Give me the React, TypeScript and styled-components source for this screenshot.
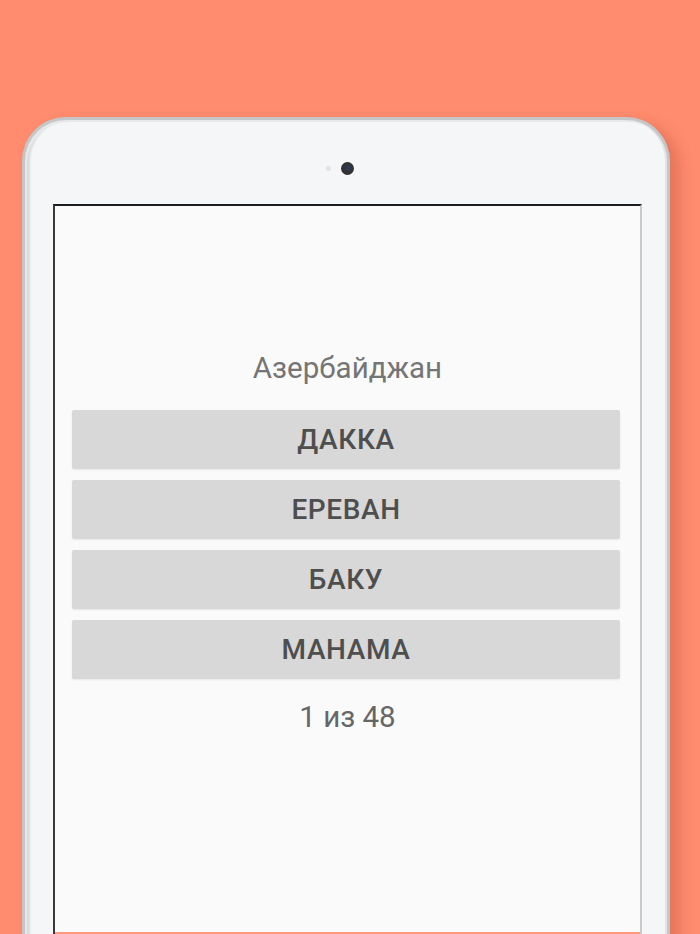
import React from "react";
import styled, { createGlobalStyle } from "styled-components";

const GlobalStyle = createGlobalStyle`
  html, body {
    margin: 0;
    padding: 0;
    height: 100%;
    overflow: hidden;
    background: #ff8c6e;
  }
  body {
    font-family: Roboto, "Noto Sans", Arial, sans-serif;
  }
`;

const Page = styled.div`
  width: 700px;
  height: 934px;
  padding-top: 117px;
  padding-left: 22px;
  box-sizing: border-box;
  overflow: hidden;
`;

const Tablet = styled.div`
  width: 648px;
  height: 900px;
  box-sizing: border-box;
  border: 3px solid #c4c6c8;
  border-bottom: none;
  border-radius: 44px 44px 0 0;
  background: #f4f6f8;
  box-shadow: inset 2px 2px 0 #e6e8ea, inset -2px 0 0 #e2e4e6,
    inset 5px 0 2px #d9dbdd, 10px 6px 14px rgba(160, 60, 40, 0.28);
  padding: 84px 25px 0 28px;
  display: flex;
  flex-direction: column;
`;

const CameraRow = styled.div`
  height: 0;
  position: relative;
`;

const Sensor = styled.span`
  position: absolute;
  top: -38px;
  left: 273px;
  width: 5px;
  height: 5px;
  border-radius: 50%;
  background: #e2e4e6;
`;

const Lens = styled.span`
  position: absolute;
  top: -42px;
  left: 288px;
  width: 13px;
  height: 13px;
  border-radius: 50%;
  background: radial-gradient(circle at 55% 45%, #2c3a66 0%, #333 45%, #2a2a2a 100%);
`;

const Screen = styled.div`
  flex: 0 0 730px;
  box-sizing: border-box;
  background: #fafafa;
  border-top: 2px solid #1e1e1e;
  border-left: 2px solid #3a3a3a;
  border-right: 2px solid #c9cacb;
  display: flex;
  flex-direction: column;
  align-items: stretch;
  padding: 145px 20px 0 17px;
`;

const Country = styled.div`
  font-size: 29.5px;
  color: #757575;
  text-align: center;
  line-height: 34px;
  margin-bottom: 25px;
  margin-left: 3px;
`;

const Options = styled.div`
  display: flex;
  flex-direction: column;
  gap: 11px;
`;

const Option = styled.button`
  height: 59px;
  border: none;
  border-radius: 2px;
  background: #d7d8d7;
  box-shadow: 0 1px 2px rgba(0, 0, 0, 0.08);
  color: #4e4e4e;
  font-family: Roboto, "Noto Sans", Arial, sans-serif;
  font-weight: 500;
  font-size: 28px;
  letter-spacing: 0.6px;
  text-transform: uppercase;
  padding: 0;
  cursor: pointer;
`;

const Counter = styled.div`
  margin-top: 21px;
  font-size: 29.5px;
  color: #666;
  text-align: center;
  line-height: 34px;
  margin-left: 3px;
`;

const Spacer = styled.div`
  flex: 1;
`;

const Footer = styled.div`
  height: 2px;
  margin: 0 -20px 0 -17px;
  background: #ff9a80;
`;

const options = ["Дакка", "Ереван", "Баку", "Манама"];

const App: React.FC = () => (
  <>
    <GlobalStyle />
    <Page>
      <Tablet>
        <CameraRow>
          <Sensor />
          <Lens />
        </CameraRow>
        <Screen>
          <Country>Азербайджан</Country>
          <Options>
            {options.map(o => (
              <Option key={o}>{o}</Option>
            ))}
          </Options>
          <Counter>1 из 48</Counter>
          <Spacer />
          <Footer />
        </Screen>
      </Tablet>
    </Page>
  </>
);

export default App;
